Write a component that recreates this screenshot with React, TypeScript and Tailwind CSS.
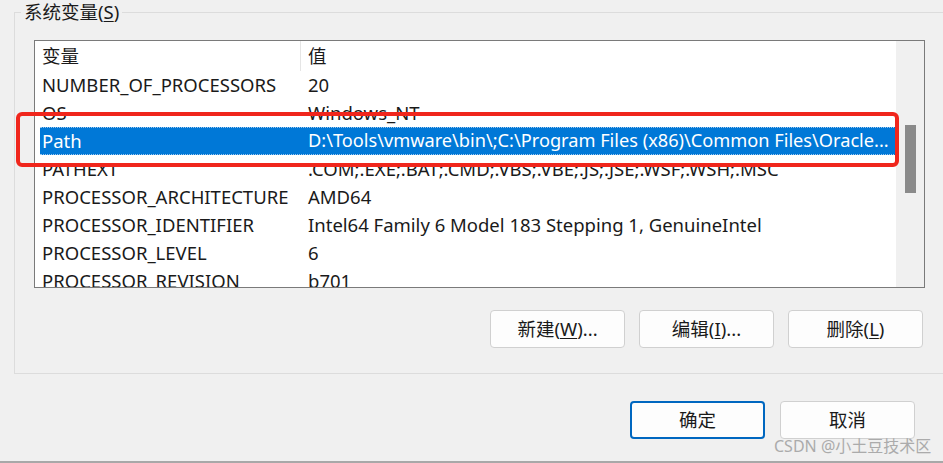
import React from 'react';

const rows: [string, string][] = [
  ['NUMBER_OF_PROCESSORS', '20'],
  ['OS', 'Windows_NT'],
  ['Path', 'D:\\Tools\\vmware\\bin\\;C:\\Program Files (x86)\\Common Files\\Oracle...'],
  ['PATHEXT', '.COM;.EXE;.BAT;.CMD;.VBS;.VBE;.JS;.JSE;.WSF;.WSH;.MSC'],
  ['PROCESSOR_ARCHITECTURE', 'AMD64'],
  ['PROCESSOR_IDENTIFIER', 'Intel64 Family 6 Model 183 Stepping 1, GenuineIntel'],
  ['PROCESSOR_LEVEL', '6'],
  ['PROCESSOR_REVISION', 'b701'],
];

const WinButton = ({ label, hotkey, suffix = '', primary = false }: { label: string; hotkey: string; suffix?: string; primary?: boolean }) => (
  <button
    className={`w-[135px] h-[38px] rounded-[4px] bg-[#fdfdfd] text-[18.5px] text-[#1a1a1a] flex items-center justify-center ${
      primary ? 'border-2 border-[#0067c0]' : 'border border-[#d0d0d0]'
    }`}
  >
    {label}
    {hotkey && (
      <>
        (<span className="underline underline-offset-2">{hotkey}</span>){suffix}
      </>
    )}
  </button>
);

export default function App() {
  return (
    <div
      className="relative w-[943px] h-[463px] overflow-hidden bg-[#f0f0f0] text-[#1a1a1a] border-b-2 border-[#a8a8a8]"
      style={{ fontFamily: '"Noto Sans", "Noto Sans CJK SC", sans-serif' }}
    >
      <div className="pt-[12px] pl-[14px]">
        <div className="relative w-[960px] h-[362px] border border-[#dcdcdc]">
          <span className="absolute -top-[12px] left-[6px] px-[3px] bg-[#f0f0f0] text-[18.5px] leading-[22px]">
            系统变量(<span className="underline underline-offset-2">S</span>)
          </span>

          <div className="ml-[19px] mt-[27px] w-[891px] h-[248px] border border-[#7a7a7a] bg-white flex overflow-hidden">
            <div className="flex-1 pl-[5px] text-[18.5px]">
              <div className="flex h-[30px] items-center">
                <div className="w-[261px] pl-[2px] border-r border-[#e5e5e5] h-full flex items-center">变量</div>
                <div className="pl-[7px]">值</div>
              </div>
              {rows.map(([name, value]) => {
                const selected = name === 'Path';
                return (
                  <div
                    key={name}
                    className={`flex h-[28px] items-center whitespace-nowrap ${
                      selected ? 'bg-[#0078d7] text-white border-y border-dotted border-[#9cc8f0]' : ''
                    }`}
                  >
                    <div className="w-[261px] pl-[2px]">{name}</div>
                    <div className={`flex-1 pl-[7px] overflow-hidden ${selected ? 'text-[18.2px]' : ''}`}>{value}</div>
                  </div>
                );
              })}
            </div>
            <div className="w-[28px] bg-[#f0f0f0] pt-[84px] pl-[9px]">
              <div className="w-[11px] h-[68px] bg-[#8a8a8a]" />
            </div>
          </div>

          <div className="ml-[19px] mt-[22px] w-[889px] flex justify-end gap-[14px]">
            <WinButton label="新建" hotkey="W" suffix="..." />
            <WinButton label="编辑" hotkey="I" suffix="..." />
            <WinButton label="删除" hotkey="L" />
          </div>
        </div>
      </div>

      <div className="mt-[27px] pr-[28px] flex justify-end gap-[15px]">
        <WinButton label="确定" hotkey="" primary />
        <WinButton label="取消" hotkey="" />
      </div>

      {/* annotation box around the Path row */}
      <div className="absolute left-[16px] top-[112px] w-[883px] h-[55px] border-[4px] border-[#f0261c] rounded-[6px]" />

      <span className="absolute left-[774px] top-[434px] text-[16px] text-[#9a9a9a] opacity-80 whitespace-nowrap">
        CSDN @小土豆技术区
      </span>
    </div>
  );
}
